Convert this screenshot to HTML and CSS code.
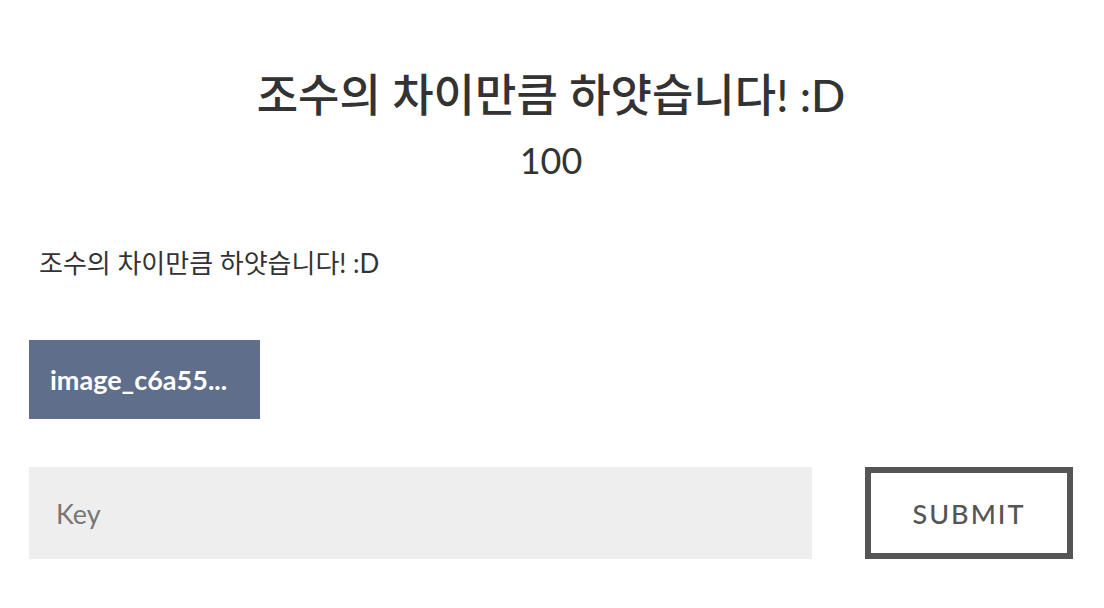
FILE: index.html
```html
<!DOCTYPE html>
<html lang="ko">
<head>
<meta charset="utf-8">
<link rel="stylesheet" href="styles.css">
</head>
<body>
<div class="challenge">
  <h3 class="challenge-name">조수의 차이만큼 하얏습니다! :D</h3>
  <h4 class="challenge-value">100</h4>
  <div class="challenge-desc">
    <p>조수의 차이만큼 하얏습니다! :D</p>
  </div>
  <div class="files">
    <a class="file-btn">image_c6a55...</a>
  </div>
  <form class="submit-row">
    <input class="key-input" type="text" placeholder="Key">
    <button class="submit-btn" type="button">Submit</button>
  </form>
</div>
</body>
</html>
```

FILE: styles.css
```css
html, body {
  margin: 0;
  padding: 0;
  background: #fff;
}
body {
  font-family: Lato, "Noto Sans CJK KR", sans-serif;
  color: #333;
}
.challenge {
  padding: 64px 31px 0 29px;
}
.challenge-name {
  margin: 0;
  text-align: center;
  font-size: 45px;
  font-weight: 500;
  line-height: 62px;
  color: #333;
}
.challenge-value {
  margin: 7px 0 0;
  text-align: center;
  font-size: 36px;
  font-weight: 400;
  line-height: 54px;
}
.challenge-desc {
  padding: 0 10px;
  margin-top: 58px;
}
.challenge-desc p {
  margin: 0;
  font-size: 26px;
  line-height: 36px;
}
.files {
  margin-top: 59px;
  display: flex;
}
.file-btn {
  display: block;
  width: 231px;
  height: 79px;
  box-sizing: border-box;
  padding: 0 21px;
  background: #5f6e8b;
  color: #fff;
  font-size: 27px;
  font-weight: 700;
  line-height: 79px;
  white-space: nowrap;
}
.submit-row {
  margin: 48px 0 0;
  display: flex;
  justify-content: space-between;
}
.key-input {
  width: 783px;
  height: 92px;
  box-sizing: border-box;
  border: none;
  background: #eee;
  padding: 0 27px;
  font-family: Lato, sans-serif;
  font-size: 27px;
  color: #333;
  outline: none;
}
.key-input::placeholder {
  color: #777;
}
.submit-btn {
  width: 208px;
  height: 92px;
  box-sizing: border-box;
  border: 6px solid #555;
  background: #fff;
  color: #555;
  font-family: Lato, sans-serif;
  font-size: 27px;
  font-weight: 500;
  letter-spacing: 2px;
  text-transform: uppercase;
  padding: 0;
}
```
